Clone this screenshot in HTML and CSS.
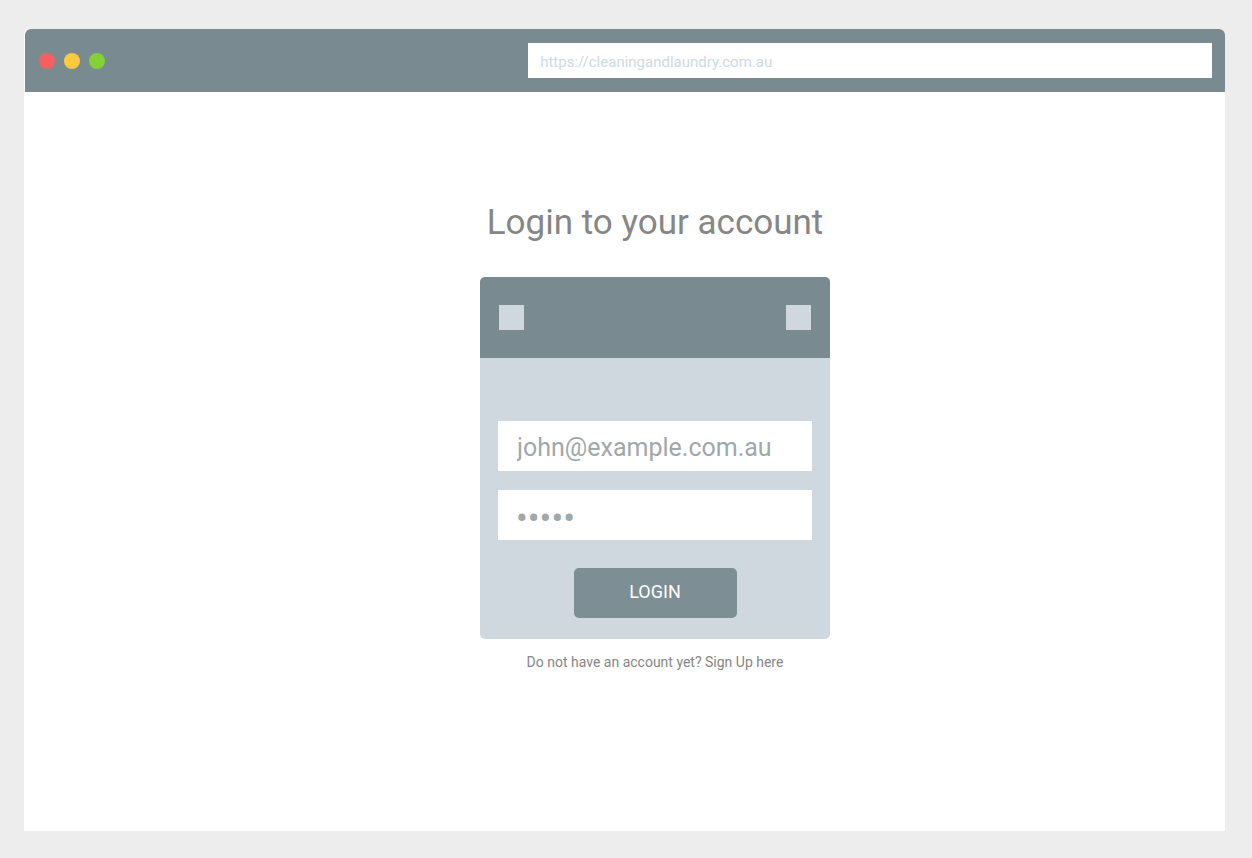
FILE: index.html
```html
<!DOCTYPE html>
<html lang="en">
<head>
<meta charset="utf-8">
<meta name="viewport" content="width=device-width, initial-scale=1">
<title>Login to your account</title>
<link rel="stylesheet" href="styles.css">
</head>
<body>
<div class="browser">
  <header class="toolbar">
    <div class="dots">
      <span class="dot dot-close"></span>
      <span class="dot dot-minimise"></span>
      <span class="dot dot-expand"></span>
    </div>
    <input class="address" type="url" aria-label="Address" value="https://cleaningandlaundry.com.au">
  </header>
  <main class="content">
    <h1 class="title">Login to your account</h1>
    <form class="card">
      <div class="card-header">
        <span class="square"></span>
        <span class="square"></span>
      </div>
      <div class="card-body">
        <input class="field field-email" type="email" aria-label="Email" value="john@example.com.au">
        <input class="field field-password" type="password" aria-label="Password" value="12345">
        <button class="login" type="button">LOGIN</button>
      </div>
    </form>
    <p class="signup">Do not have an account yet? <a class="signup-link" href="#">Sign Up here</a></p>
  </main>
</div>
</body>
</html>
```
FILE: styles.css
```css
* {
  box-sizing: border-box;
}

body {
  margin: 0;
  min-height: 100vh;
  display: flex;
  padding: 29px 27px 27px 24px;
  background: #ededed;
  font-family: Roboto, sans-serif;
}

input,
button {
  font-family: inherit;
  border: 0;
  border-radius: 0;
  outline: 0;
}

.browser {
  flex: 1;
  display: flex;
  flex-direction: column;
  background: #fff;
  border-radius: 6px 6px 0 0;
}

.toolbar {
  display: flex;
  align-items: center;
  justify-content: space-between;
  height: 63px;
  margin-left: 1px;
  padding: 0 13px 0 14px;
  background: #798b90;
  border-radius: 6px 6px 0 0;
}

.dots {
  display: flex;
  gap: 9px;
}

.dot {
  width: 16px;
  height: 16px;
  border-radius: 50%;
}

.dot-close {
  background: #f65f62;
}

.dot-minimise {
  background: #ffc93f;
}

.dot-expand {
  background: #82d135;
}

.address {
  width: 58.3%;
  height: 35px;
  padding: 2px 12px 0;
  background: #fff;
  color: #cfdade;
  font-size: 15px;
}

.content {
  flex: 1;
  display: flex;
  flex-direction: column;
  align-items: center;
  padding: 109px 0 24px 61px;
}

.title {
  margin: 0 0 32px;
  color: #868686;
  font-size: 35px;
  font-weight: 400;
  line-height: 44px;
}

.card {
  width: 100%;
  max-width: 350px;
  overflow: hidden;
  background: #cfd8de;
  border-radius: 5px;
}

.card-header {
  display: flex;
  justify-content: space-between;
  padding: 28px 19px;
  background: #798b90;
}

.square {
  width: 25px;
  height: 25px;
  background: #cfd8de;
}

.card-body {
  display: flex;
  flex-direction: column;
  align-items: center;
  padding: 63px 18px 21px;
}

.field {
  width: 100%;
  height: 50px;
  background: #fff;
  color: #9fa8ab;
}

.field-email {
  margin-bottom: 19px;
  padding: 14px 19px 11px;
  font-size: 25px;
  line-height: 25px;
}

.field-password {
  margin-bottom: 28px;
  padding: 6px 18px 0;
  font-size: 35px;
}

.login {
  width: 163px;
  height: 50px;
  padding: 0 0 3px;
  background: #7d8e94;
  border-radius: 5px;
  color: #fff;
  font-size: 18px;
}

.signup {
  margin: 13px 0 0;
  color: #868686;
  font-size: 14px;
  line-height: 20px;
}

.signup-link {
  color: inherit;
  text-decoration: none;
}
```
